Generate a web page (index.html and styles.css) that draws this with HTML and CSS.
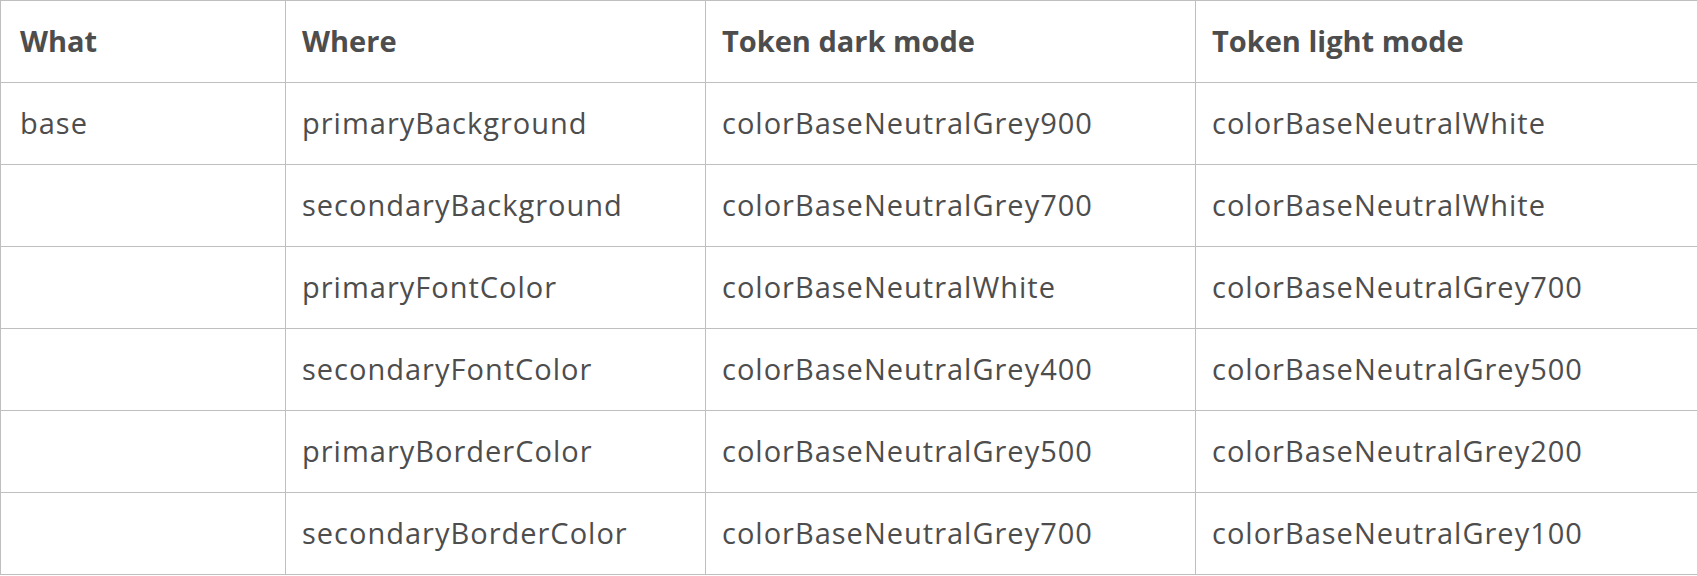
FILE: index.html
```html
<!DOCTYPE html>
<html>
<head>
<meta charset="utf-8">
<link rel="stylesheet" href="styles.css">
</head>
<body>
<table class="tokens">
  <colgroup>
    <col class="c-what">
    <col class="c-where">
    <col class="c-dark">
    <col class="c-light">
  </colgroup>
  <thead>
    <tr><th>What</th><th>Where</th><th>Token dark mode</th><th>Token light mode</th></tr>
  </thead>
  <tbody>
    <tr><td>base</td><td>primaryBackground</td><td>colorBaseNeutralGrey900</td><td>colorBaseNeutralWhite</td></tr>
    <tr><td></td><td>secondaryBackground</td><td>colorBaseNeutralGrey700</td><td>colorBaseNeutralWhite</td></tr>
    <tr><td></td><td>primaryFontColor</td><td>colorBaseNeutralWhite</td><td>colorBaseNeutralGrey700</td></tr>
    <tr><td></td><td>secondaryFontColor</td><td>colorBaseNeutralGrey400</td><td>colorBaseNeutralGrey500</td></tr>
    <tr><td></td><td>primaryBorderColor</td><td>colorBaseNeutralGrey500</td><td>colorBaseNeutralGrey200</td></tr>
    <tr><td></td><td>secondaryBorderColor</td><td>colorBaseNeutralGrey700</td><td>colorBaseNeutralGrey100</td></tr>
  </tbody>
</table>
</body>
</html>
```

FILE: styles.css
```css
html, body {
  margin: 0;
  padding: 0;
  background: #ffffff;
}
.tokens {
  width: 1697px;
  border-collapse: collapse;
  table-layout: fixed;
  font-family: "Open Sans", "Noto Sans", sans-serif;
  font-size: 29px;
  color: #4d4d4d;
  border: 1px solid #dcdcdc;
}
.c-what { width: 285px; }
.c-where { width: 420px; }
.c-dark { width: 490px; }
.c-light { width: 502px; }
.tokens th,
.tokens td {
  height: 82px;
  padding: 0 16px 3px 16px;
  text-align: left;
  vertical-align: middle;
  border: 1px solid #bfbfbf;
  white-space: nowrap;
  box-sizing: border-box;
}
.tokens th:first-child,
.tokens td:first-child {
  padding-left: 19px;
}
.tokens th {
  font-weight: 700;
}
.tokens td {
  font-weight: 400;
  letter-spacing: 1px;
}
```
